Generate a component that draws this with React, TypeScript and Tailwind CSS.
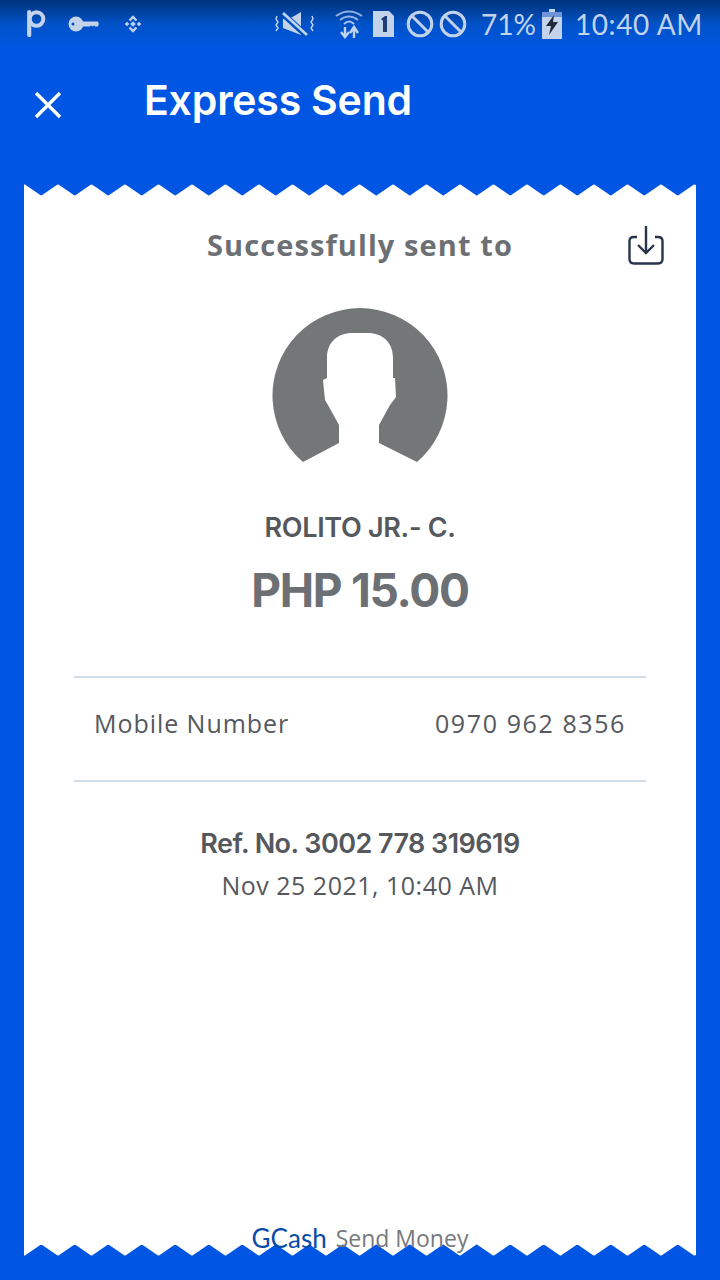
import React from "react";

const PERIOD = 33.5;
const teeth = (() => {
  let d = "M0 16 L0 2";
  for (let k = 0; k <= 20; k++) {
    const x = 0.5 + k * PERIOD;
    d += ` L${x} 2 L${x + PERIOD / 2} 13.5`;
  }
  d += " L672 16 Z";
  return d;
})();

function Teeth({ flip }: { flip?: boolean }) {
  return (
    <svg
      width="672"
      height="14"
      viewBox="0 0 672 14"
      className={flip ? "block -scale-y-100 -mt-px" : "block -mb-px"}
    >
      <path d={teeth} fill="#ffffff" stroke="#ffffff" strokeWidth="3" strokeLinejoin="round" />
    </svg>
  );
}

function StatusBar() {
  const c = "#c3d3ec";
  return (
    <div className="flex h-[48px] items-center bg-gradient-to-b from-[#00337c] via-[#0052c8] to-[#0057e0] pl-[26px] pr-[16px]">
      <svg width="20" height="28" viewBox="0 0 20 28" className="-mt-[3px]">
        <path d="M3.200 3 V26" stroke={c} strokeWidth="4.200" strokeLinecap="round" fill="none" />
        <circle cx="10.500" cy="10" r="6.800" stroke={c} strokeWidth="4" fill="none" />
      </svg>
      <svg width="32" height="18" viewBox="0 0 32 18" className="ml-[22px] -mt-[1px]">
        <circle cx="8" cy="9" r="7.500" fill={c} />
        <circle cx="5" cy="9" r="1.500" fill="#0052c8" />
        <path d="M14 6.500 H30 Q31.500 9 30 11.500 H27 L26 10.500 L24.500 11.500 L23 10.500 L21.500 11.500 H14 Z" fill={c} />
      </svg>
      <svg width="18" height="18" viewBox="0 0 18 18" className="ml-[24px] -mt-[1px]" fill="none" stroke={c} strokeWidth="2.400">
        <path d="M5.500 5.500 L9 2 L12.500 5.500" />
        <path d="M5.500 12.500 L9 16 L12.500 12.500" />
        <path d="M1 9 L3 7 L5 9 L3 11 Z M13 9 L15 7 L17 9 L15 11 Z" fill={c} strokeWidth="0.500" />
        <path d="M9 6.500 L11.500 9 L9 11.500 L6.500 9 Z" fill={c} strokeWidth="0.500" />
      </svg>
      <svg width="40" height="26" viewBox="0 0 40 26" className="ml-[133px]">
        <path d="M2 5 L1 8 L3 11 L1 14 L3 17 L1 20" stroke={c} strokeWidth="1.400" fill="none" />
        <path d="M37 5 L38 8 L36 11 L38 14 L36 17 L38 20" stroke={c} strokeWidth="1.400" fill="none" />
        <path d="M8 8 H14 L26 1 V24 L8 17 Z" fill={c} />
        <path d="M8 3 L32 25" stroke="#0050c4" strokeWidth="6" />
        <path d="M8 2 L32 24" stroke={c} strokeWidth="2.600" />
      </svg>
      <svg width="28" height="30" viewBox="0 0 28 30" className="ml-[20px]">
        <path d="M1 7 Q14 -2 27 7" stroke="#8fb0e4" strokeWidth="2" fill="none" />
        <path d="M5 11 Q14 4 23 11" stroke="#8fb0e4" strokeWidth="2" fill="none" />
        <path d="M9 15 Q14 10 19 15" stroke="#a8c2ea" strokeWidth="2" fill="none" />
        <path d="M10 18 V26 M6 23 L10 28 L14 23" stroke={c} strokeWidth="2.400" fill="none" />
        <path d="M19 29 V20 M15 24 L19 18 L23 24" stroke={c} strokeWidth="2.400" fill="none" />
      </svg>
      <svg width="22" height="26" viewBox="0 0 22 26" className="ml-[10px]">
        <path d="M0 0 H16 L21 5 V26 H0 Z" fill={c} />
        <path d="M8 8 L12 5 H14 V21 H10 V10 Z" fill="#1d3f78" />
      </svg>
      <svg width="28" height="28" viewBox="0 0 28 28" className="ml-[11px]">
        <circle cx="14" cy="14" r="11.800" stroke={c} strokeWidth="3" fill="none" />
        <path d="M6 6 L22 22" stroke={c} strokeWidth="3" />
      </svg>
      <svg width="28" height="28" viewBox="0 0 28 28" className="ml-[5px]">
        <circle cx="14" cy="14" r="11.800" stroke={c} strokeWidth="3" fill="none" />
        <path d="M6 6 L22 22" stroke={c} strokeWidth="3" />
      </svg>
      <span className="ml-[14px] font-['Lato',sans-serif] text-[28px] leading-none text-[#c3d3ec]">71%</span>
      <svg width="20" height="30" viewBox="0 0 20 30" className="ml-[6px] -mt-[1px]">
        <path d="M7 0 H13 V3 H20 V30 H0 V3 H7 Z" fill={c} />
        <path d="M0 3 H20 V8 H0 Z" fill="#6f95d6" />
        <path d="M12 6 L4 17 H9 L7 26 L16 13 H11 Z" fill="#1f2a3a" />
      </svg>
      <span className="ml-[13px] font-['Lato',sans-serif] text-[28px] leading-none tracking-[0.6px] whitespace-nowrap text-[#c3d3ec]">10:40 AM</span>
    </div>
  );
}

export default function App() {
  return (
    <div className="flex h-[1280px] w-[720px] flex-col overflow-hidden bg-[#0056e3] font-['Inter',sans-serif]">
      <StatusBar />
      <header className="flex h-[136px] items-start">
        <svg width="28" height="28" viewBox="0 0 28 28" className="ml-[34px] mt-[43px]">
          <path d="M2 2 L26 26 M26 2 L2 26" stroke="#ffffff" strokeWidth="3.400" />
        </svg>
        <h1 className="ml-[82px] mt-[28px] text-[41px] leading-[48px] font-semibold tracking-[-0.2px] text-white">Express Send</h1>
      </header>
      <main className="mx-6 flex h-[1072px] flex-col">
        <Teeth />
        <div className="flex flex-1 flex-col bg-white">
          <div className="relative mt-[28px] flex h-[40px] items-center justify-center">
            <h2 className="font-['Open_Sans',sans-serif] text-[29px] font-bold tracking-[1.1px] text-[#6c6f74]">Successfully sent to</h2>
            <svg width="36" height="40" viewBox="0 0 36 40" className="absolute right-[32px] top-0" fill="none" stroke="#28344a" strokeWidth="2.400">
              <path d="M9 12 H6 Q1.500 12 1.500 16 V34 Q1.500 38.500 6 38.500 H30 Q34.500 38.500 34.500 34 V16 Q34.500 12 30 12 H27" />
              <path d="M18 1 V28 M10 20 L18 28 L26 20" />
            </svg>
          </div>
          <svg width="200" height="170" viewBox="0 0 200 170" className="mx-auto mt-[35px]">
            <path
              d="M43 162 A87.500 87.500 0 1 1 157 162 L119 143 L119 125 L130 105 L136 97 L135 78 L133 78 L133 58 C133 42 122 33 108 33 L92 33 C78 33 67 42 67 58 L67 78 L63 80 L65 100 L68 105 L79 125 L79 143 Z"
              fill="#747778"
            />
          </svg>
          <p className="mt-[40px] text-center text-[27px] leading-[36px] font-semibold tracking-[-0.3px] text-[#55585d]">ROLITO JR.- C.</p>
          <p className="mt-[14px] text-center text-[46px] leading-[60px] font-bold tracking-[-1.3px] text-[#6c6f74]">PHP 15.00</p>
          <div className="mx-[50px] mt-[56px] flex h-[106px] items-center justify-between border-y-2 border-[#d1dce6] px-[20px] pb-[10px] font-['Open_Sans',sans-serif] text-[25px] text-[#55585d]">
            <span className="tracking-[0.95px]">Mobile Number</span>
            <span className="tracking-[1.6px]">0970 962 8356</span>
          </div>
          <p className="mt-[42px] text-center text-[27px] leading-[40px] font-semibold tracking-[-0.55px] text-[#55585d]">Ref. No. 3002 778 319619</p>
          <p className="mt-[3px] text-center font-['Open_Sans',sans-serif] text-[25px] leading-[36px] tracking-[0.5px] text-[#55585d]">Nov 25 2021, 10:40 AM</p>
          <div className="flex-1" />
          <p className="relative z-10 -mb-[7px] flex h-[24px] items-center justify-center gap-[9px] text-[23px] whitespace-nowrap">
            <span className="font-['Lato',sans-serif] text-[26px] text-[#0a4aa8]">GCash</span>
            <span className="font-['Open_Sans',sans-serif] text-[#77797d]">Send Money</span>
          </p>
        </div>
        <Teeth flip />
      </main>
    </div>
  );
}
